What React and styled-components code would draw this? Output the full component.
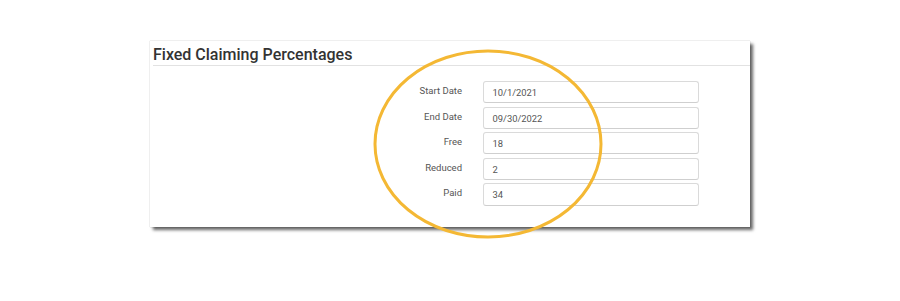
import React from "react";
import styled, { createGlobalStyle } from "styled-components";

const Global = createGlobalStyle`
  html, body { margin: 0; padding: 0; background: #fff; }
  body { font-family: Roboto, "Liberation Sans", Arial, sans-serif; }
`;

const Page = styled.div`
  box-sizing: border-box;
  min-height: 301px;
  padding: 41px 0 0 150px;
`;

const Card = styled.div`
  position: relative;
  width: 600px;
  height: 186px;
  box-sizing: border-box;
  background: #fff;
  box-shadow: 0 0 1px rgba(0, 0, 0, 0.35), 3px 3px 3px rgba(0, 0, 0, 0.6);
`;

const Header = styled.div`
  margin-left: 3px;
  height: 25px;
  box-sizing: border-box;
  padding-top: 2px;
  border-bottom: 1px solid #e2e2e2;
`;

const Title = styled.h2`
  margin: 0;
  font-size: 16px;
  line-height: 23px;
  font-weight: 500;
  color: #333;
`;

const Form = styled.div`
  display: grid;
  grid-template-columns: 312px 216px;
  column-gap: 20.5px;
  row-gap: 3.3px;
  padding-top: 15px;
`;

const Label = styled.label`
  text-align: right;
  font-size: 9.5px;
  color: #555;
  line-height: 22px;
  align-self: start;
  margin-top: -1px;
`;

const Input = styled.div`
  height: 22.3px;
  box-sizing: border-box;
  border: 1px solid #dadada;
  border-bottom-color: #cfcfcf;
  border-radius: 3px;
  padding-left: 9px;
  font-size: 9.4px;
  line-height: 21px;
  color: #555;
`;

const Annotation = styled.svg`
  position: absolute;
  left: 222px;
  top: 7px;
  overflow: visible;
  pointer-events: none;
`;

const fields = [
  ["Start Date", "10/1/2021"],
  ["End Date", "09/30/2022"],
  ["Free", "18"],
  ["Reduced", "2"],
  ["Paid", "34"],
];

export default function App() {
  return (
    <>
      <Global />
      <Page>
        <Card>
          <Header>
            <Title>Fixed Claiming Percentages</Title>
          </Header>
          <Form>
            {fields.map(([l, v]) => (
              <React.Fragment key={l}>
                <Label>{l}</Label>
                <Input>{v}</Input>
              </React.Fragment>
            ))}
          </Form>
          <Annotation width="232" height="192" viewBox="0 0 232 192">
            <ellipse cx="116" cy="96" rx="113" ry="93" fill="none" stroke="#F4B834" strokeWidth="3" />
          </Annotation>
        </Card>
      </Page>
    </>
  );
}
